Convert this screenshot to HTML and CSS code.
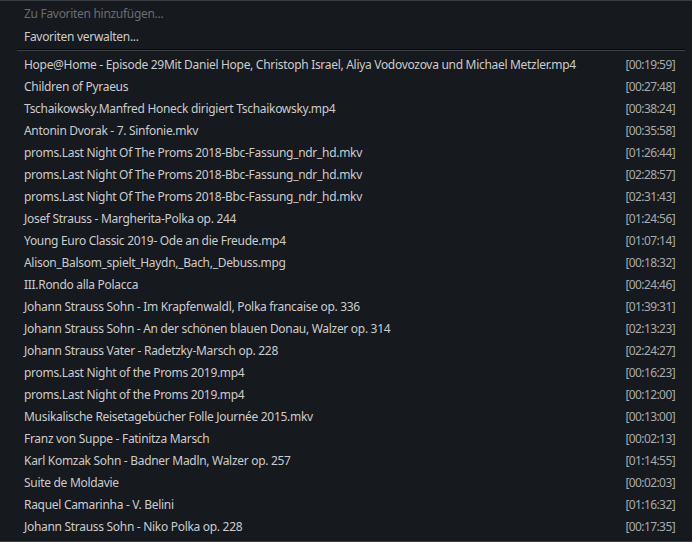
FILE: index.html
```html
<!DOCTYPE html>
<html lang="de">
<head>
<meta charset="utf-8">
<link rel="stylesheet" href="styles.css">
</head>
<body>
<div class="menu">
  <div class="item disabled">Zu Favoriten hinzufügen...</div>
  <div class="item">Favoriten verwalten...</div>
  <div class="sep"></div>
  <div class="row"><span class="name">Hope@Home - Episode 29Mit Daniel Hope, Christoph Israel, Aliya Vodovozova und Michael Metzler.mp4</span><span class="time">[00:19:59]</span></div>
  <div class="row"><span class="name">Children of Pyraeus</span><span class="time">[00:27:48]</span></div>
  <div class="row"><span class="name">Tschaikowsky.Manfred Honeck dirigiert Tschaikowsky.mp4</span><span class="time">[00:38:24]</span></div>
  <div class="row"><span class="name">Antonin Dvorak - 7. Sinfonie.mkv</span><span class="time">[00:35:58]</span></div>
  <div class="row"><span class="name">proms.Last Night Of The Proms 2018-Bbc-Fassung_ndr_hd.mkv</span><span class="time">[01:26:44]</span></div>
  <div class="row"><span class="name">proms.Last Night Of The Proms 2018-Bbc-Fassung_ndr_hd.mkv</span><span class="time">[02:28:57]</span></div>
  <div class="row"><span class="name">proms.Last Night Of The Proms 2018-Bbc-Fassung_ndr_hd.mkv</span><span class="time">[02:31:43]</span></div>
  <div class="row"><span class="name">Josef Strauss - Margherita-Polka op. 244</span><span class="time">[01:24:56]</span></div>
  <div class="row"><span class="name">Young Euro Classic 2019- Ode an die Freude.mp4</span><span class="time">[01:07:14]</span></div>
  <div class="row"><span class="name">Alison_Balsom_spielt_Haydn,_Bach,_Debuss.mpg</span><span class="time">[00:18:32]</span></div>
  <div class="row"><span class="name">III.Rondo alla Polacca</span><span class="time">[00:24:46]</span></div>
  <div class="row"><span class="name">Johann Strauss Sohn - Im Krapfenwaldl, Polka francaise op. 336</span><span class="time">[01:39:31]</span></div>
  <div class="row"><span class="name">Johann Strauss Sohn - An der schönen blauen Donau, Walzer op. 314</span><span class="time">[02:13:23]</span></div>
  <div class="row"><span class="name">Johann Strauss Vater - Radetzky-Marsch op. 228</span><span class="time">[02:24:27]</span></div>
  <div class="row"><span class="name">proms.Last Night of the Proms 2019.mp4</span><span class="time">[00:16:23]</span></div>
  <div class="row"><span class="name">proms.Last Night of the Proms 2019.mp4</span><span class="time">[00:12:00]</span></div>
  <div class="row"><span class="name">Musikalische Reisetagebücher Folle Journée 2015.mkv</span><span class="time">[00:13:00]</span></div>
  <div class="row"><span class="name">Franz von Suppe - Fatinitza Marsch</span><span class="time">[00:02:13]</span></div>
  <div class="row"><span class="name">Karl Komzak Sohn - Badner Madln, Walzer op. 257</span><span class="time">[01:14:55]</span></div>
  <div class="row"><span class="name">Suite de Moldavie</span><span class="time">[00:02:03]</span></div>
  <div class="row"><span class="name">Raquel Camarinha - V. Belini</span><span class="time">[01:16:32]</span></div>
  <div class="row"><span class="name">Johann Strauss Sohn - Niko Polka op. 228</span><span class="time">[00:17:35]</span></div>
</div>
</body>
</html>
```
FILE: styles.css
```css
html, body {
  margin: 0;
  padding: 0;
  background: #16191d;
}
body {
  width: 692px;
  height: 542px;
  overflow: hidden;
  font-family: "Noto Sans", "Open Sans", sans-serif;
  font-size: 12px;
  letter-spacing: -0.3px;
  color: #cbcccd;
}
.menu {
  box-sizing: border-box;
  height: 542px;
  border-top: 1px solid #3a3d41;
  border-bottom: 1px solid #3a3d41;
  padding-top: 1px;
}
.item {
  height: 23px;
  line-height: 23px;
  padding-left: 24px;
}
.item.disabled {
  color: #6a6d72;
}
.sep {
  margin: 1px 7px 3px 17px;
  height: 1px;
  background: #08090b;
  border-bottom: 1px solid #3e4145;
}
.row {
  display: flex;
  justify-content: space-between;
  height: 22px;
  line-height: 22px;
  padding: 0 17px 0 24px;
}
.time {
  color: #a9abae;
  letter-spacing: -0.6px;
}
```
